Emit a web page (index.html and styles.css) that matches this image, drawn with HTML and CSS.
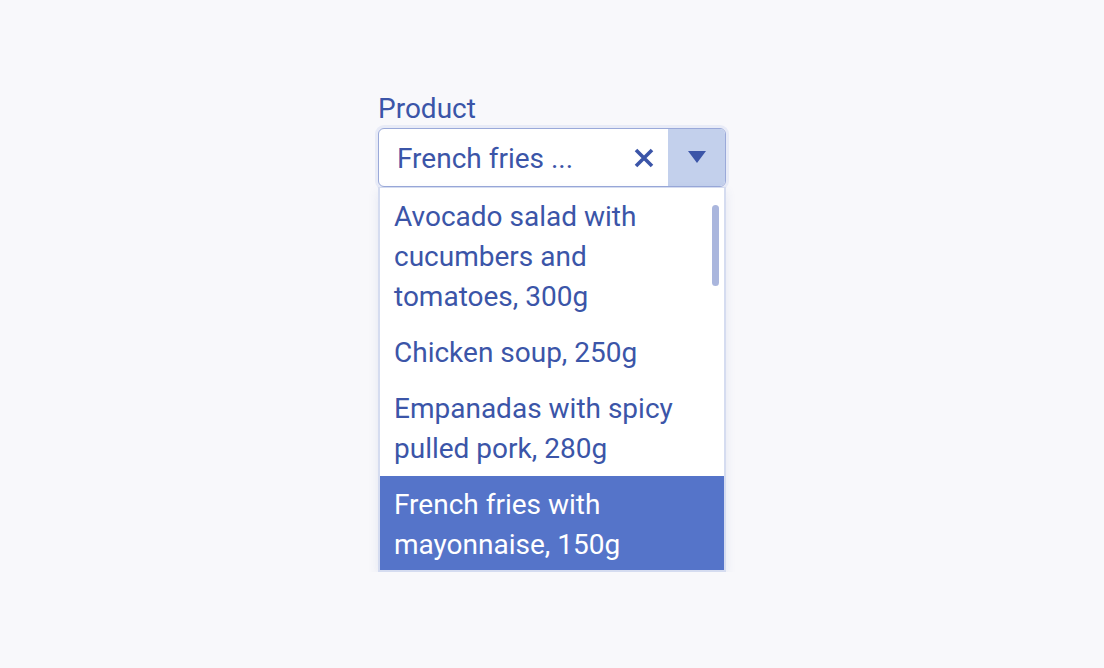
FILE: index.html
```html
<!DOCTYPE html>
<html lang="en">
  <head>
    <meta charset="UTF-8" />
    <title>Product select</title>
    <link rel="stylesheet" href="styles.css">
  </head>
  <body>
    <div class="field">
      <label class="label" for="product">Product</label>
      <div class="combo">
        <input class="combo-input" id="product" type="text" value="French fries ..." />
        <button class="clear" type="button" aria-label="Clear">
          <svg width="22" height="22" viewBox="0 0 22 22">
            <path d="M3 3 L19 19 M19 3 L3 19" stroke="currentColor" stroke-width="3.6" stroke-linecap="butt" fill="none" />
          </svg>
        </button>
        <button class="toggle" type="button" aria-label="Toggle">
          <svg width="18" height="13" viewBox="0 0 18 13">
            <path d="M0 0 H18 L9 12 Z" fill="currentColor" />
          </svg>
        </button>
      </div>
      <div class="menu">
        <ul class="options">
          <li class="option">Avocado salad with cucumbers and tomatoes, 300g</li>
          <li class="option">Chicken soup, 250g</li>
          <li class="option">Empanadas with spicy pulled pork, 280g</li>
          <li class="option selected">French fries with mayonnaise, 150g</li>
        </ul>
        <div class="thumb"></div>
      </div>
    </div>
  </body>
</html>
```

FILE: styles.css
```css
body {
  margin: 0;
  padding: 0;
  background-color: #f8f8fb;
  font-family: Roboto, "Noto Sans", sans-serif;
  color: #3b55a8;
  display: flex;
  justify-content: center;
}
.field {
  width: 348px;
  margin-top: 92px;
  display: flex;
  flex-direction: column;
}
.label {
  font-size: 28px;
  line-height: 33px;
  margin-bottom: 3px;
}
.combo {
  display: flex;
  height: 59px;
  box-sizing: border-box;
  border: 1px solid #9aa9d9;
  border-radius: 6px;
  background-color: #fff;
  box-shadow: 0 0 0 3px #e8ebf7;
  overflow: hidden;
}
.combo-input {
  flex: 1;
  min-width: 0;
  border: none;
  outline: none;
  padding: 2px 0 0 18px;
  font-family: inherit;
  font-size: 28px;
  color: #3b55a8;
  background: transparent;
}
.clear {
  border: none;
  background: transparent;
  color: #3b55a8;
  width: 46px;
  padding: 0;
  margin-right: 1px;
  display: flex;
  align-items: center;
  justify-content: center;
}
.toggle {
  border: none;
  width: 57px;
  padding: 0;
  background-color: #c3d0ec;
  color: #3b55a8;
  display: flex;
  align-items: center;
  justify-content: center;
}
.menu {
  position: relative;
  height: 385px;
  box-sizing: border-box;
  border: 2px solid #d5dcf0;
  border-top-width: 1px;
  background-color: #fff;
  box-shadow: 0 4px 10px rgba(60, 80, 160, 0.1);
  overflow: hidden;
}
.options {
  list-style: none;
  margin: 0;
  padding: 0;
}
.option {
  font-size: 28px;
  line-height: 40px;
  padding: 9px 16px 7px 14px;
}
.selected {
  background-color: #5574c9;
  color: #fff;
}
.thumb {
  position: absolute;
  top: 17px;
  right: 5px;
  width: 7px;
  height: 81px;
  border-radius: 4px;
  background-color: #aab6dd;
}
```
